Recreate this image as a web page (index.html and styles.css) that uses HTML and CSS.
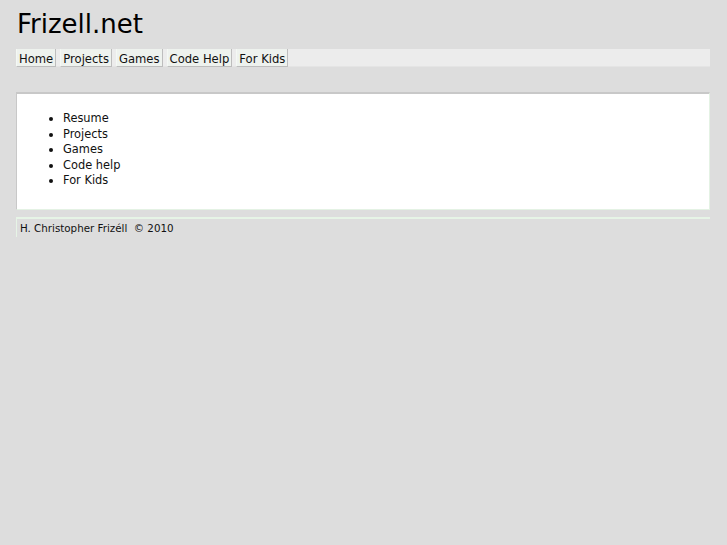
FILE: index.html
```html
<!DOCTYPE html>
<html>
<head>
<meta charset="utf-8">
<title>Frizell.net</title>
<link rel="stylesheet" href="styles.css">
</head>
<body>
<div class="page">
  <h1 class="title">Frizell.net</h1>
  <nav class="nav">
    <a class="nav-item" href="#">Home</a>
    <a class="nav-item" href="#">Projects</a>
    <a class="nav-item" href="#">Games</a>
    <a class="nav-item" href="#">Code Help</a>
    <a class="nav-item" href="#">For Kids</a>
  </nav>
  <div class="content">
    <ul class="links">
      <li>Resume</li>
      <li>Projects</li>
      <li>Games</li>
      <li>Code help</li>
      <li>For Kids</li>
    </ul>
  </div>
  <div class="footer">H. Christopher Frizéll &nbsp;© 2010</div>
</div>
</body>
</html>
```

FILE: styles.css
```css
html, body {
  margin: 0;
  padding: 0;
  background: #dddddd;
  font-family: "DejaVu Sans", sans-serif;
  color: #111;
}
.page {
  padding: 8px 17px 0 16px;
}
.title {
  margin: 0 0 0 1px;
  font-size: 26px;
  font-weight: normal;
  line-height: 32px;
  color: #000;
}
.nav {
  margin-top: 9px;
  display: flex;
  gap: 4px;
  background: #ececec;
  border-bottom: 1px solid #e4e4e4;
  height: 17px;
}
.nav-item {
  font-size: 11.6px;
  line-height: 18px;
  padding: 1px 2px 0 2px;
  color: #111;
  text-decoration: none;
  background: #eef2ee;
  border-right: 1px solid #bdbdbd;
  border-bottom: 1px solid #bdbdbd;
  border-left: 1px solid #f4f8f4;
  height: 18px;
  box-sizing: border-box;
}
.content {
  margin-top: 25px;
  background: #fff;
  border-top: 2px solid #c8c8c8;
  border-left: 1px solid #c8c8c8;
  border-right: 1px solid #e4f2e4;
  border-bottom: 1px solid #e4f2e4;
  padding: 17px 0 20px 0;
}
.links {
  margin: 0;
  padding-left: 46px;
  font-size: 11.4px;
  line-height: 15.5px;
}
.footer {
  margin-top: 7px;
  border-top: 2px solid #e6f4e6;
  border-left: 1px solid #e6f4e6;
  font-size: 10.3px;
  line-height: 18px;
  padding-left: 3px;
  color: #111;
}
```
